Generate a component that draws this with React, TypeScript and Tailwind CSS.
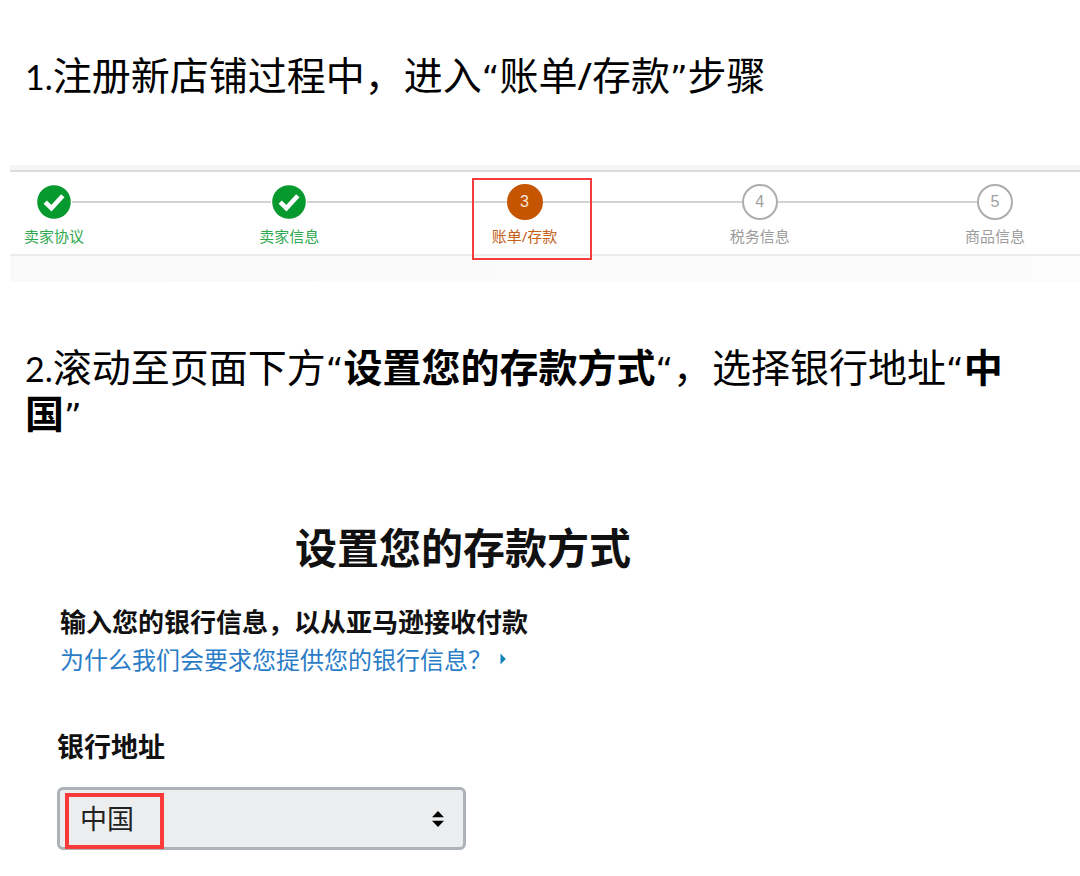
import { Fragment, type ReactNode } from "react";

type StepState = "done" | "current" | "todo";

const steps: { label: string; state: StepState }[] = [
  { label: "卖家协议", state: "done" },
  { label: "卖家信息", state: "done" },
  { label: "账单/存款", state: "current" },
  { label: "税务信息", state: "todo" },
  { label: "商品信息", state: "todo" },
];

const circleStyle: Record<StepState, string> = {
  done: "text-white",
  current: "bg-[#c55500] text-[#f6e5d8]",
  todo: "bg-white border-2 border-[#adadad] text-[#a0a0a0]",
};

const labelStyle: Record<StepState, string> = {
  done: "text-[#2fa84f]",
  current: "text-[#c4621c]",
  todo: "text-[#9c9c9c]",
};

function Step({ label, state, number }: { label: string; state: StepState; number: number }) {
  return (
    <li className="relative flex w-9 shrink-0 flex-col items-center gap-1">
      <span
        className={`flex size-9 items-center justify-center rounded-full font-['Liberation_Sans',sans-serif] text-base ${circleStyle[state]}`}
      >
        {state === "done" ? (
          <svg viewBox="0 0 36 36" className="size-9" fill="none" aria-hidden="true">
            <circle cx="18" cy="18" r="16.8" fill="#069a2e" />
            <path d="M9.2 18.2 L15.4 24.2 L26.8 11.8" stroke="currentColor" strokeWidth="4.6" />
          </svg>
        ) : (
          number
        )}
      </span>
      <span className={`text-[15px] leading-6 whitespace-nowrap ${labelStyle[state]}`}>{label}</span>
      {state === "current" && (
        <span className="absolute -top-1.5 -left-[35px] h-[82px] w-[120px] border-2 border-[#f73c3c]" />
      )}
    </li>
  );
}

function Stepper() {
  return (
    <nav className="ml-2.5">
      <div className="h-[7px] border-b-2 border-[#dcdcdc] bg-[#f5f5f5]" />
      <ol className="flex h-[82px] pt-3 pr-[67px] pl-[26px]">
        {steps.map((step, i) => (
          <Fragment key={step.label}>
            {i > 0 && <li aria-hidden="true" className="mt-[17px] h-0.5 flex-1 bg-[#d3d3d3]" />}
            <Step label={step.label} state={step.state} number={i + 1} />
          </Fragment>
        ))}
      </ol>
      <div className="h-7 border-t-2 border-[#ececec] bg-linear-to-r from-[#f9f9f9] to-[#fcfcfc]" />
    </nav>
  );
}

function Instruction({ number, children }: { number: number; children: ReactNode }) {
  return (
    <p className="pr-[68px] pl-[25px] text-[39px] leading-[46px]">
      <span className="font-['Lato',sans-serif] text-[34px] leading-none">{number}.</span>
      {children}
    </p>
  );
}

function Quote({ children }: { children: string }) {
  return <span className="font-['DejaVu_Sans',sans-serif] text-[34px] leading-none">{children}</span>;
}

export default function App() {
  return (
    <main
      lang="zh-CN"
      className="min-h-screen bg-white pt-13 font-['Noto_Sans','Noto_Sans_CJK_SC',sans-serif] text-black"
    >
      <Instruction number={1}>
        注册新店铺过程中，进入<Quote>“</Quote>账单/存款<Quote>”</Quote>步骤
      </Instruction>

      <div className="mt-[67px] mb-[62px]">
        <Stepper />
      </div>

      <Instruction number={2}>
        滚动至页面下方<Quote>“</Quote>
        <b>设置您的存款方式</b>
        <Quote>“</Quote>，选择银行地址<Quote>“</Quote>
        <b>中国</b>
        <Quote>”</Quote>
      </Instruction>

      <section className="mt-[82px] px-[57px] pb-6 font-['Noto_Sans_CJK_SC',sans-serif] text-[#111111]">
        <h1 className="w-[812px] max-w-full text-center text-[42px] leading-[56px] font-bold">设置您的存款方式</h1>
        <h2 className="mt-7 pl-[3px] text-[26px] leading-[38px] font-bold">输入您的银行信息，以从亚马逊接收付款</h2>
        <a href="#why" className="flex items-center gap-2 pl-[3px] text-2xl leading-[38px] text-[#2a7cc7]">
          为什么我们会要求您提供您的银行信息？
          <svg viewBox="0 0 6 12" className="h-3 w-1.5" fill="#1283b8" aria-hidden="true">
            <path d="M0.5 0.5 L5.8 6 L0.5 11.5 Z" />
          </svg>
        </a>

        <label htmlFor="bank-country" className="mt-12 block text-[27px] leading-10 font-bold">
          银行地址
        </label>
        <div className="relative mt-[21px] h-[63px] w-[409px] max-w-full">
          <select
            id="bank-country"
            defaultValue="CN"
            className="size-full appearance-none rounded-md border-[3px] border-[#adb1b8] bg-[#ebedef] pl-5 text-[27px] text-[#222222]"
          >
            <option value="CN">中国</option>
          </select>
          <svg
            viewBox="0 0 12 16"
            className="pointer-events-none absolute top-6 right-[22px] h-4 w-3"
            fill="#000000"
            aria-hidden="true"
          >
            <path d="M0 6.2 L6 0 L12 6.2 Z M0 9.8 L6 16 L12 9.8 Z" />
          </svg>
          <span className="pointer-events-none absolute top-1.5 left-2 h-14 w-[99px] border-4 border-[#fb3a3a]" />
        </div>
      </section>
    </main>
  );
}
